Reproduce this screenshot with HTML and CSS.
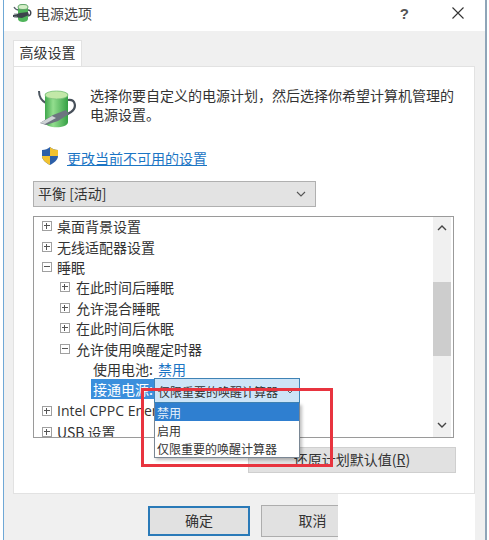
FILE: index.html
```html
<!DOCTYPE html>
<html lang="zh-CN">
  <head>
    <meta charset="UTF-8" />
    <title>电源选项</title>
    <link rel="stylesheet" href="styles.css">
  </head>
  <body>
    <div class="window">
      <div class="title-bar">
        <svg class="title-icon" viewBox="0 0 19 20" width="19" height="20">
          <path d="M1 4c1 2 2 3 5 3" fill="none" stroke="#5a646c" stroke-width="1.300" />
          <path d="M14 7c5-1 5 6 0 6" fill="none" stroke="#3f474e" stroke-width="1.500" />
          <path d="M5 4c0-4 10-4 10 0v12c0 4-10 4-10 0z" fill="#4fb45a" />
          <ellipse cx="10" cy="4" rx="5" ry="2.500" fill="#d5efc8" stroke="#5b9b63" stroke-width="0.800" />
          <path d="M0 12l7-2 8-1 1 3-7 3-9-1z" fill="#3c444b" />
          <path d="M1 11h3M1 14h3" stroke="#8a9299" stroke-width="1" />
        </svg>
        <span class="title-text">电源选项</span>
        <span class="help">?</span>
        <svg class="close" viewBox="0 0 12 12" width="12" height="12">
          <path d="M0.500 0.500l11 11M11.500 0.500l-11 11" stroke="#333" stroke-width="1.100" fill="none" />
        </svg>
      </div>

      <div class="dialog">
        <div class="tab">高级设置</div>
        <div class="panel">
          <div class="intro">
            <svg class="battery" viewBox="0 0 38 38" width="38" height="38">
              <defs>
                <linearGradient id="cell" x1="0" y1="0" x2="1" y2="0">
                  <stop offset="0" stop-color="#3fa74c" />
                  <stop offset="0.350" stop-color="#93de8e" />
                  <stop offset="1" stop-color="#35a045" />
                </linearGradient>
              </defs>
              <path d="M1 1c0 6 3 10 7 12" fill="none" stroke="#4c5660" stroke-width="2" />
              <path d="M30 10c8-1 9 8 3 12l-5 3" fill="none" stroke="#47505a" stroke-width="2.200" />
              <path d="M7 5c0-5 23-5 23 0v27c0 7-23 7-23 0z" fill="url(#cell)" />
              <ellipse cx="18.500" cy="5" rx="11.500" ry="4" fill="#c3e8a8" stroke="#7cc27c" stroke-width="0.800" />
              <path d="M2 33l13-8 13-5 3 4-11 7-12 4z" fill="#6c757f" />
              <path d="M2 33l12-7 4 2-11 6z" fill="#cfd3d6" />
            </svg>
            <p class="intro-text">选择你要自定义的电源计划，然后选择你希望计算机管理的电源设置。</p>
          </div>

          <div class="link-row">
            <svg class="shield" viewBox="0 0 18 20" width="18" height="20">
              <path d="M9 1c2 2 5 3 8 3v6c0 4-4 7-8 9-4-2-8-5-8-9V4c3 0 6-1 8-3z" fill="#2c5fa8" />
              <path d="M9 1c2 2 5 3 8 3v6H9z" fill="#f2c230" />
              <path d="M9 10v9c-4-2-8-5-8-9z" fill="#f2c230" />
            </svg>
            <a class="link">更改当前不可用的设置</a>
          </div>

          <div class="plan-select">
            <span>平衡 [活动]</span>
            <svg class="chev" viewBox="0 0 10 6" width="10" height="6">
              <path d="M1 1l4 4 4-4" fill="none" stroke="#555" stroke-width="1.100" />
            </svg>
          </div>

          <div class="tree">
            <div class="tree-list">
              <div class="node"><i class="box plus"></i>桌面背景设置</div>
              <div class="node"><i class="box plus"></i>无线适配器设置</div>
              <div class="node"><i class="box minus"></i>睡眠</div>
              <div class="node level2"><i class="box plus"></i>在此时间后睡眠</div>
              <div class="node level2"><i class="box plus"></i>允许混合睡眠</div>
              <div class="node level2"><i class="box plus"></i>在此时间后休眠</div>
              <div class="node level2"><i class="box minus"></i>允许使用唤醒定时器</div>
              <div class="node level3">使用电池:<span class="value">禁用</span></div>
              <div class="node level3"><span class="selected">接通电源:</span></div>
              <div class="node tail"><i class="box plus"></i><span class="latin">Intel CPPC Energy Efficiency Settings</span></div>
              <div class="node tail"><i class="box plus"></i>USB 设置</div>
            </div>
            <div class="scrollbar">
              <svg viewBox="0 0 10 6" width="10" height="6"><path d="M1 5l4-4 4 4" fill="none" stroke="#444" stroke-width="1.400" /></svg>
              <div class="track"><div class="thumb"></div></div>
              <svg viewBox="0 0 10 6" width="10" height="6"><path d="M1 1l4 4 4-4" fill="none" stroke="#444" stroke-width="1.400" /></svg>
            </div>
          </div>

          <div class="restore-row">
            <button class="restore">还原计划默认值(<u>R</u>)</button>
          </div>
        </div>

        <div class="bottom">
          <div class="footer">
            <button class="btn primary">确定</button>
            <button class="btn cancel">取消</button>
          </div>
          <div class="footer-blank"></div>
        </div>
      </div>

      <div class="combo">
        <div class="combo-head"><span>仅限重要的唤醒计算器</span>
          <svg viewBox="0 0 6 4" width="6" height="4"><path d="M0.500 0.500l2.500 2.500 2.500-2.500" fill="none" stroke="#555" stroke-width="0.900" /></svg>
        </div>
        <div class="combo-list">
          <div class="combo-item active">禁用</div>
          <div class="combo-item">启用</div>
          <div class="combo-item">仅限重要的唤醒计算器</div>
        </div>
      </div>
      <div class="red-box"></div>
    </div>
  </body>
</html>
```

FILE: styles.css
```css
* {
  box-sizing: border-box;
}

html,
body {
  margin: 0;
  padding: 0;
  height: 540px;
  overflow: hidden;
  background-color: #fff;
}

body {
  font-family: "Noto Sans CJK SC", "Liberation Sans", sans-serif;
  font-size: 14px;
  color: #333;
}

.window {
  position: relative;
  width: 484px;
  height: 540px;
  margin-left: 3px;
  border-left: 1px solid #6fa8d6;
  border-right: 2px solid #8fa5b8;
  overflow: hidden;
}

.title-bar {
  display: flex;
  align-items: center;
  height: 31px;
  padding: 0 0 5px 9px;
  background-color: #fff;
}

.title-icon {
  margin-right: 4px;
}

.title-text {
  color: #444;
  flex: 1;
}

.help {
  font-family: "Liberation Sans", sans-serif;
  font-size: 15px;
  font-weight: bold;
  color: #555;
  margin-right: 43px;
}

.close {
  margin-right: 21px;
}

.dialog {
  height: 509px;
  padding: 9px 10px 0 9px;
  background-color: #f0f0f0;
}

.tab {
  width: 69px;
  height: 26px;
  line-height: 23px;
  text-align: center;
  background-color: #fff;
  border: 1px solid #e2e2e2;
  border-bottom: none;
}

.panel {
  height: 428px;
  padding: 20px 18px 0 19px;
  background-color: #fff;
  border: 1px solid #e2e2e2;
}

.intro {
  display: flex;
  gap: 14px;
}

.battery {
  flex: none;
  margin: 3px 0 0 5px;
}

.intro-text {
  margin: -1px 0 0 0;
  line-height: 19px;
  width: 372px;
}

.link-row {
  display: flex;
  gap: 8px;
  margin-top: 18px;
  margin-left: 8px;
}

.link {
  margin-top: 2px;
  line-height: 20px;
  color: #1b75c4;
  text-decoration: underline;
}

.plan-select {
  display: flex;
  align-items: center;
  justify-content: space-between;
  width: 283px;
  height: 26px;
  margin-top: 13px;
  padding: 0 9px 3px 4px;
  background-color: #e3e3e3;
  border: 1px solid #b0b0b0;
}

.plan-select .chev {
  margin-top: 3px;
}

.tree {
  display: flex;
  width: 421px;
  height: 222px;
  margin-top: 9px;
  background-color: #fff;
  border: 1px solid #9a9a9a;
  overflow: hidden;
}

.tree-list {
  flex: 1;
  overflow: hidden;
  margin-top: -1px;
}

.node {
  display: flex;
  align-items: center;
  height: 20.400px;
  padding-left: 8px;
  white-space: nowrap;
}

.tail {
  margin-top: 1px;
}

.level2 {
  padding-left: 26px;
}

.level3 {
  padding-left: 59px;
}

.value {
  color: #1b75c4;
  margin-left: 5px;
}

.selected {
  height: 20px;
  margin-left: -2px;
  padding: 0 2px;
  width: 64px;
  line-height: 20px;
  background-color: #3b8fdc;
  color: #fff;
}

.latin {
  font-family: "Open Sans", "Noto Sans CJK SC", sans-serif;
}

.box {
  position: relative;
  flex: none;
  width: 10px;
  height: 10px;
  margin-right: 5px;
  border: 1px solid #a0a0a0;
}

.level2 .box {
  margin-right: 6px;
}

.box::before {
  content: "";
  position: absolute;
  left: 1px;
  top: 3px;
  width: 6px;
  height: 1px;
  background-color: #555;
}

.plus::after {
  content: "";
  position: absolute;
  left: 3px;
  top: 1px;
  width: 1px;
  height: 6px;
  background-color: #555;
}

.scrollbar {
  display: flex;
  flex-direction: column;
  align-items: center;
  flex: none;
  width: 18px;
  margin-right: 2px;
  padding: 8px 0 9px 0;
  background-color: #f0f0f0;
}

.track {
  flex: 1;
  width: 100%;
  padding-top: 51px;
}

.thumb {
  height: 74px;
  background-color: #cdcdcd;
}

.restore-row {
  display: flex;
  justify-content: flex-end;
  margin-top: 9px;
}

.restore {
  width: 208px;
  height: 26px;
  padding: 0 0 3px 0;
  font: inherit;
  color: #333;
  background-color: #e1e1e1;
  border: 1px solid #cfcfcf;
}

.bottom {
  display: flex;
  height: 47px;
  margin-left: -9px;
}

.footer {
  display: flex;
  align-items: flex-start;
  gap: 11px;
  width: 334px;
  padding: 11px 0 0 144px;
  overflow: hidden;
}

.footer-blank {
  flex: 1;
  background-color: #fff;
}

.btn {
  flex: none;
  width: 103px;
  height: 32px;
  padding: 0 0 3px 0;
  font: inherit;
  color: #333;
  background-color: #e1e1e1;
  border: 1px solid #adadad;
}

.primary {
  width: 102px;
  height: 30px;
  margin-top: 1px;
  border: 2px solid #2a7ab8;
}

/* the open dropdown sits over the tree */
.combo {
  position: absolute;
  left: 150px;
  top: 378px;
  width: 146px;
  font-size: 12px;
}

.combo-head {
  display: flex;
  align-items: center;
  justify-content: space-between;
  height: 25px;
  padding: 2px 6px 0 3px;
  background-color: #cde4f7;
  border: 1px solid #3f83b5;
  white-space: nowrap;
}

.combo-list {
  background-color: #fff;
  border: 1px solid #7a8794;
  border-top: none;
  box-shadow: 2px 2px 3px rgba(0, 0, 0, 0.25);
}

.combo-item {
  height: 18px;
  line-height: 20px;
  padding-left: 2px;
  white-space: nowrap;
  overflow: hidden;
}

.active {
  background-color: #2f7fd0;
  color: #e8f2fb;
}

.red-box {
  position: absolute;
  left: 137px;
  top: 388px;
  width: 192px;
  height: 79px;
  border: 3px solid #e8343f;
}
```
